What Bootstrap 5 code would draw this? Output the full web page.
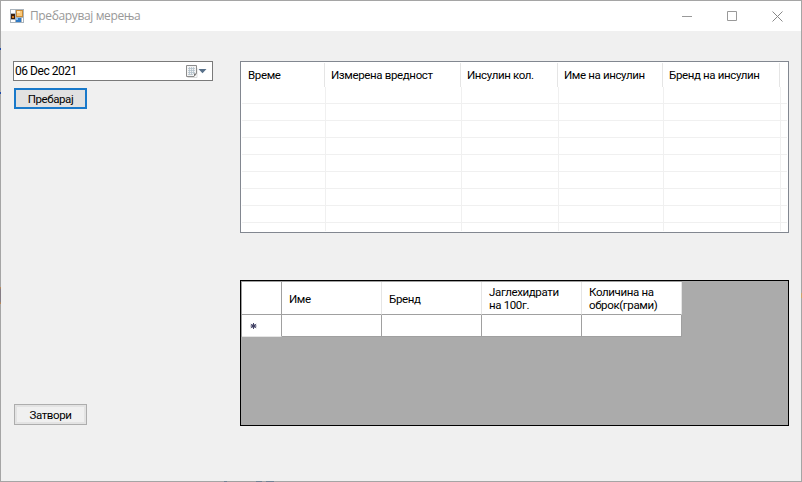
<!DOCTYPE html>
<html lang="mk">
<head>
<meta charset="utf-8">
<title>Пребарувај мерења</title>
<link href="https://cdn.jsdelivr.net/npm/bootstrap@5.3.0/dist/css/bootstrap.min.css" rel="stylesheet">
<style>
body{width:802px;height:482px;overflow:hidden;font-family:Roboto,"Noto Sans",sans-serif;font-size:11.5px;line-height:13px;letter-spacing:-.36px;color:#000}
.window{width:802px;height:482px;padding:1px;
 background:
 linear-gradient(#1f4aa8,#1f4aa8) 0 48px/1px 2px no-repeat,
 linear-gradient(#1f4aa8,#1f4aa8) 0 92px/1px 2px no-repeat,
 linear-gradient(#c98b45,#857d85 15%,#857d85 85%,#c98b45) 0 287px/1px 17px no-repeat,
 linear-gradient(#c9a36b,#c9a36b) 801px 293px/1px 5px no-repeat,
 linear-gradient(90deg,#6f8193 3px,#a0a0a0 3px 32px,#6f8193 32px 38px,#a0a0a0 38px 42px,#6f8193 42px) 224px 481px/50px 1px no-repeat,#a5a5a5}
.titlebar{height:30px;background:#fff;padding:0 1px 0 8px}
.caption{font:12px/16px "Open Sans","Noto Sans",sans-serif;color:#999;margin-left:5px;letter-spacing:-.37px}
.winbtn{width:45px}
.client{background:#f0f0f0;height:450px;padding:30px 12px 0 12px}
.side{width:200px;height:364px;margin-right:27px}
.datebox{height:20px;border:1px solid #7a7a7a;background:#fff;padding:0 5px 0 1px}
.datebox span{font-size:12px;letter-spacing:-.46px}
.wbtn{width:73px;font-size:11.5px;line-height:13px;letter-spacing:-.4px;padding:1px 0 0;margin-left:1px;border-radius:0;color:#000}
.search{height:21px;border:2px solid #1979ca;background:#e1e1e1;margin-top:7px}
.close-form{height:21px;border:1px solid #adadad;background:#f0f0f0;box-shadow:inset 0 0 0 2px #e3e3e3}
.listview{width:549px;height:172px;border:1px solid #828790;background:#fff;padding:1px}
.lhead{height:24px}
.lhead>div{border-right:1px solid #e5e5e5;padding-left:6px;white-space:nowrap}
.lrow{height:17px;border-bottom:1px solid #f0f0f0}
.lrow>div{border-right:1px solid #f0f0f0}
.lrow:last-child{height:8px;border-bottom:0}
.a1{width:83px}.a2{width:136px}.a3{width:97px}.a4{width:105px}.a5{width:117px}
.lrow .a1{width:84px}
.datagrid{width:549px;height:146px;border:1px solid #000;background:#ababab;margin-top:47px}
.dg{width:441px;border-left:1px solid #a0a0a0;border-top:1px solid #a0a0a0}
.dg>div>div{background:#fff;width:100px;white-space:nowrap}
.dg>div>div:first-child{width:40px}
.dhead{height:33px}
.dhead>div{border-right:1px solid #e5e5e5;border-bottom:1px solid #a0a0a0;padding:2px 0 0 7px}
.dhead>div:first-child{border-right-color:#a0a0a0}
.drow{height:22px}
.drow>div{border-right:1px solid #a0a0a0;border-bottom:1px solid #a0a0a0}
.drow>div:first-child{border-bottom-color:#e5e5e5;padding-left:8px}
svg{display:block;flex:none}
</style>
<script src="https://cdn.jsdelivr.net/npm/bootstrap@5.3.0/dist/js/bootstrap.bundle.min.js"></script>
</head>
<body>
<div class="window">
 <header class="titlebar d-flex align-items-center">
  <svg width="16" height="16" viewBox="0 0 16 16" shape-rendering="crispEdges"><path fill="#aab4bd" d="M1 1h14v14H1z"/><path fill="#fff" d="M2 2h4v3H2zM2 12h4v2H2zM13 10h1v4h-1z"/><path fill="#3b2010" d="M2 6h4v5H2z"/><path fill="#d77b1c" d="M3 8h2v2H3z"/><path fill="#c98a35" d="M7 2h7v7H7z"/><path fill="#fbc878" d="M8 3h5v5H8z"/><path fill="#ffe3b0" d="M8 3h3v2H8z"/><path fill="#2f7bc8" d="M7 10h5v4H7z"/><path fill="#8ec3f2" d="M7 10h2v2H7z"/></svg>
  <div class="caption me-auto">Пребарувај мерења</div>
  <div class="winbtn"><svg class="mx-auto" width="11" height="11"><path d="M0 5.5h10" stroke="#999"/></svg></div>
  <div class="winbtn"><svg class="mx-auto" width="11" height="11"><path d="M.5.5h9v9h-9z" fill="none" stroke="#999"/></svg></div>
  <div class="winbtn"><svg class="mx-auto" width="11" height="11"><path d="M.5.5l10 10M10.500 .5l-10 10" stroke="#888"/></svg></div>
 </header>
 <main class="client d-flex align-items-start">
  <section class="side d-flex flex-column align-items-start">
   <div class="datebox d-flex align-items-center w-100">
    <span class="me-auto">06 Dec 2021</span>
    <svg width="22" height="14" viewBox="0 0 22 14"><path d="M2.500 13.500h9.500V4" fill="none" stroke="#ddd"/><path d="M1.500 1.500h10v8l-2.500 3H1.500z" fill="#f4f4f4" stroke="#8c8c8c"/><path d="M3 4.500h7M3 6.500h7M3 8.500h7M3 10.500h5M4.500 3v8M6.500 3v8M8.500 3v7" stroke="#b4c2cc" stroke-width=".8"/><path d="M9 12.500v-3h2.500z" fill="#777"/><path d="M13.500 5h8l-4 4.200z" fill="#58718a"/></svg>
   </div>
   <button class="btn wbtn search">Пребарај</button>
   <button class="btn wbtn close-form mt-auto mb-0">Затвори</button>
  </section>
  <section>
   <div class="listview">
    <div class="lhead d-flex align-items-center"><div class="a1 h-100 d-flex align-items-center">Време</div><div class="a2 h-100 d-flex align-items-center">Измерена вредност</div><div class="a3 h-100 d-flex align-items-center">Инсулин кол.</div><div class="a4 h-100 d-flex align-items-center">Име на инсулин</div><div class="a5 h-100 d-flex align-items-center">Бренд на инсулин</div></div>
    <div class="lrow d-flex"><div class="a1"></div><div class="a2"></div><div class="a3"></div><div class="a4"></div><div class="a5"></div></div>
    <div class="lrow d-flex"><div class="a1"></div><div class="a2"></div><div class="a3"></div><div class="a4"></div><div class="a5"></div></div>
    <div class="lrow d-flex"><div class="a1"></div><div class="a2"></div><div class="a3"></div><div class="a4"></div><div class="a5"></div></div>
    <div class="lrow d-flex"><div class="a1"></div><div class="a2"></div><div class="a3"></div><div class="a4"></div><div class="a5"></div></div>
    <div class="lrow d-flex"><div class="a1"></div><div class="a2"></div><div class="a3"></div><div class="a4"></div><div class="a5"></div></div>
    <div class="lrow d-flex"><div class="a1"></div><div class="a2"></div><div class="a3"></div><div class="a4"></div><div class="a5"></div></div>
    <div class="lrow d-flex"><div class="a1"></div><div class="a2"></div><div class="a3"></div><div class="a4"></div><div class="a5"></div></div>
    <div class="lrow d-flex"><div class="a1"></div><div class="a2"></div><div class="a3"></div><div class="a4"></div><div class="a5"></div></div>
    <div class="lrow d-flex"><div class="a1"></div><div class="a2"></div><div class="a3"></div><div class="a4"></div><div class="a5"></div></div>
   </div>
   <div class="datagrid">
    <div class="dg">
     <div class="dhead d-flex"><div></div><div class="d-flex align-items-center">Име</div><div class="d-flex align-items-center">Бренд</div><div class="d-flex align-items-center">Јаглехидрати<br>на 100г.</div><div class="d-flex align-items-center">Количина на<br>оброк(грами)</div></div>
     <div class="drow d-flex"><div class="d-flex align-items-center"><svg width="7" height="8"><circle cx="3.500" cy="4" r="1.800" fill="#2a2a55"/><path d="M3.500 1v6M.8 2.200l5.400 3.600M6.200 2.200L.8 5.800M.5 4h6" stroke="#444466" stroke-width="1"/></svg></div><div></div><div></div><div></div><div></div></div>
    </div>
   </div>
  </section>
 </main>
</div>
</body>
</html>
